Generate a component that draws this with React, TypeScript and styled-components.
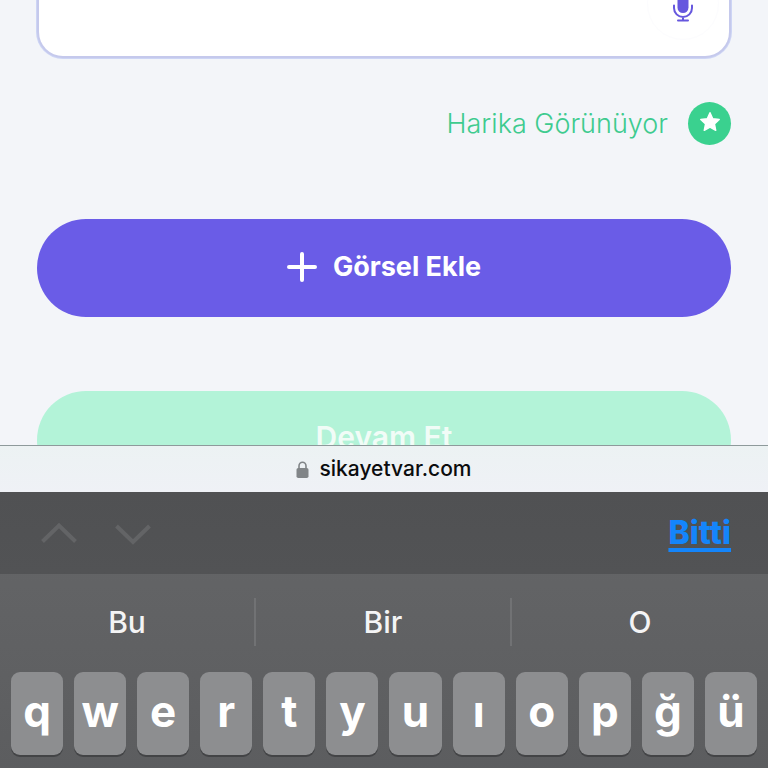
import React from "react";
import styled, { createGlobalStyle } from "styled-components";

const GlobalStyle = createGlobalStyle`
  *, *::before, *::after { box-sizing: border-box; }
  body { margin: 0; background: #f3f5f9; }
  button, textarea { font: inherit; }
  button { border: 0; padding: 0; background: none; cursor: pointer; }
`;

const Screen = styled.div`
  display: flex;
  flex-direction: column;
  height: 100vh;
  overflow: hidden;
  font-family: Inter, "Liberation Sans", sans-serif;
`;

const Page = styled.main`
  flex: 1;
  min-height: 0;
  overflow: hidden;
  padding: 0 37px;
  background: #f3f5f9;
`;

const ComplaintBox = styled.div`
  position: relative;
`;

const ComplaintInput = styled.textarea`
  display: block;
  width: 100%;
  height: 58px;
  padding: 0 90px 16px 24px;
  border: 2px solid #c5c9ec;
  border-top: 0;
  border-radius: 0 0 26px 26px;
  box-shadow: 0 0 0 1px #cdd5f5;
  background: #fff;
  outline: 0;
  resize: none;
`;

const MicButton = styled.button`
  position: absolute;
  right: 12px;
  top: -32px;
  display: flex;
  align-items: center;
  justify-content: center;
  width: 72px;
  height: 72px;
  border: 1px solid #fcfcfe;
  border-radius: 50%;
`;

const Feedback = styled.div`
  display: flex;
  align-items: center;
  justify-content: flex-end;
  gap: 20px;
  margin-top: 44px;
  color: #3ecb8f;
  font-size: 27px;
  font-weight: 300;
  line-height: 32px;
`;

const Badge = styled.span`
  display: flex;
  align-items: center;
  justify-content: center;
  width: 43px;
  height: 43px;
  padding-bottom: 3px;
  border-radius: 50%;
  background: #3ad18f;
`;

const PillButton = styled.button<{ $tone: "primary" | "success" }>`
  display: flex;
  align-items: center;
  justify-content: center;
  gap: 16px;
  width: 100%;
  height: 98px;
  padding-bottom: ${(p) => (p.$tone === "primary" ? "2px" : "6px")};
  margin-top: 74px;
  border-radius: 49px;
  color: ${(p) => (p.$tone === "primary" ? "#fff" : "#f1fcf7")};
  background: ${(p) => (p.$tone === "primary" ? "#6a5ce7" : "#b3f3d8")};
  font-size: ${(p) => (p.$tone === "primary" ? "27px" : "30px")};
  font-weight: ${(p) => (p.$tone === "primary" ? 700 : 600)};
  line-height: 32px;
`;

const AddressBar = styled.div`
  display: flex;
  align-items: center;
  justify-content: center;
  gap: 10px;
  height: 47px;
  border-top: 1px solid #8e9a9b;
  background: linear-gradient(#ecf2f3, #eff1f6);
  color: #0b0c0d;
  font-size: 21px;
  font-weight: 500;
  line-height: 24px;
`;

const Keyboard = styled.section`
  background: linear-gradient(#656668, #5c5d5f);
`;

const AccessoryBar = styled.div`
  display: flex;
  align-items: center;
  gap: 36px;
  height: 82px;
  padding: 0 37px 0 40px;
  background: linear-gradient(#505153, #525355);
`;

const StepButton = styled.button`
  display: flex;
  width: 38px;
  height: 24px;
`;

const DoneButton = styled.button`
  margin-left: auto;
  color: #1485fb;
  font-size: 32px;
  font-weight: 800;
  line-height: 36px;
  text-decoration: underline;
  text-decoration-thickness: 4px;
  text-underline-offset: 4px;
  text-decoration-skip-ink: none;
`;

const Suggestions = styled.div`
  display: grid;
  grid-template-columns: repeat(3, 1fr);
  padding: 24px 0 26px;
`;

const Suggestion = styled.button`
  height: 48px;
  color: #f4f4f5;
  font-size: 30px;
  font-weight: 500;
  line-height: 36px;

  &:not(:last-child) {
    border-right: 2px solid #717274;
  }
`;

const KeyRow = styled.div`
  display: grid;
  grid-template-columns: repeat(12, 1fr);
  gap: 11px;
  padding: 0 11px 13px;
`;

const Key = styled.button`
  height: 83px;
  padding-bottom: 5px;
  border-radius: 9px;
  box-shadow: 0 2px 0 #434446;
  background: #8d8e90;
  color: #fff;
  font-size: 44px;
  font-weight: 700;
  line-height: 52px;
`;

const letters = ["q", "w", "e", "r", "t", "y", "u", "ı", "o", "p", "ğ", "ü"];
const words = ["Bu", "Bir", "O"];

const MicIcon = () => (
  <svg width="22" height="36" viewBox="0 0 22 36" fill="none" aria-hidden="true">
    <rect x="5.5" y="1" width="11" height="26" rx="5.500" fill="#6657de" />
    <path
      d="M2 19.5v2.500a9 9 0 0 0 18 0v-2.500M11 31v3.500M6 34.500h10"
      stroke="#6657de"
      strokeWidth="2"
      strokeLinecap="round"
    />
  </svg>
);

const StarIcon = () => (
  <svg width="22" height="22" viewBox="0 0 22 22" aria-hidden="true">
    <path
      d="M11 1.8l2.7 6 6.5.7-4.8 4.4 1.3 6.4L11 16.1l-5.7 3.2 1.3-6.4-4.8-4.4 6.5-.7z"
      fill="#fff"
      stroke="#fff"
      strokeWidth="1.5"
      strokeLinejoin="round"
    />
  </svg>
);

const PlusIcon = () => (
  <svg width="30" height="30" viewBox="0 0 30 30" aria-hidden="true">
    <path d="M15 2v26M2 15h26" stroke="#fff" strokeWidth="4" strokeLinecap="round" />
  </svg>
);

const LockIcon = () => (
  <svg width="13" height="17" viewBox="0 0 13 17" fill="none" aria-hidden="true">
    <rect x="0.5" y="7" width="12" height="10" rx="1.8" fill="#818588" />
    <path d="M3 8V5a3.5 3.8 0 0 1 7 0v3" stroke="#818588" strokeWidth="1.6" />
  </svg>
);

const Chevron = ({ d }: { d: string }) => (
  <svg width="38" height="24" viewBox="0 0 38 24" fill="none" aria-hidden="true">
    <path d={d} stroke="#636466" strokeWidth="4" />
  </svg>
);

export default function App() {
  return (
    <Screen lang="tr">
      <GlobalStyle />
      <Page>
        <ComplaintBox>
          <ComplaintInput aria-label="Şikayet metni" />
          <MicButton type="button" aria-label="Sesli yaz">
            <MicIcon />
          </MicButton>
        </ComplaintBox>
        <Feedback>
          Harika Görünüyor
          <Badge>
            <StarIcon />
          </Badge>
        </Feedback>
        <PillButton type="button" $tone="primary">
          <PlusIcon />
          Görsel Ekle
        </PillButton>
        <PillButton type="button" $tone="success">
          Devam Et
        </PillButton>
      </Page>
      <AddressBar>
        <LockIcon />
        sikayetvar.com
      </AddressBar>
      <Keyboard aria-label="Klavye">
        <AccessoryBar>
          <StepButton type="button" aria-label="Önceki alan">
            <Chevron d="M2.5 20.5L19 4.5L35.5 20.5" />
          </StepButton>
          <StepButton type="button" aria-label="Sonraki alan">
            <Chevron d="M2.5 5L19 21L35.5 5" />
          </StepButton>
          <DoneButton type="button">Bitti</DoneButton>
        </AccessoryBar>
        <Suggestions>
          {words.map((word) => (
            <Suggestion type="button" key={word}>
              {word}
            </Suggestion>
          ))}
        </Suggestions>
        <KeyRow>
          {letters.map((letter) => (
            <Key type="button" key={letter}>
              {letter}
            </Key>
          ))}
        </KeyRow>
      </Keyboard>
    </Screen>
  );
}
